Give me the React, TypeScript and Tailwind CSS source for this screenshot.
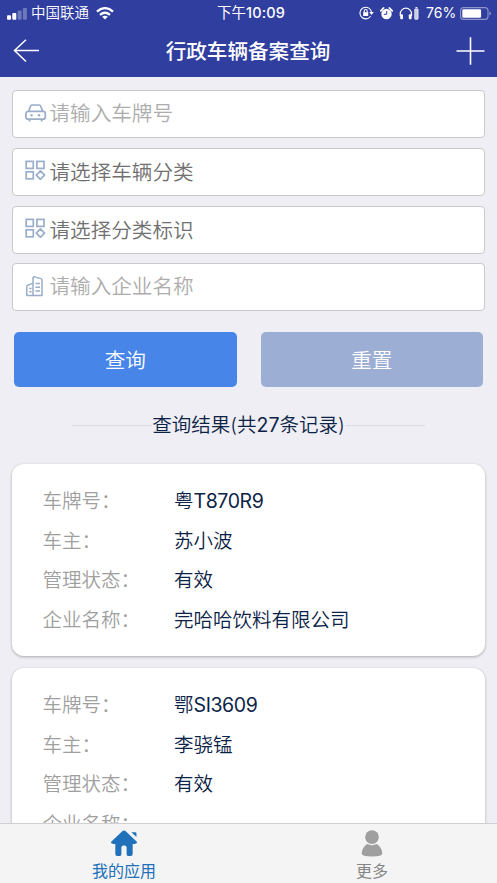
import type { ReactNode } from 'react';

type Row = { label: string; value: string; code?: string };

const records: Row[][] = [
  [
    { label: '车牌号：', value: '粤', code: 'T870R9' },
    { label: '车主：', value: '苏小波' },
    { label: '管理状态：', value: '有效' },
    { label: '企业名称：', value: '完哈哈饮料有限公司' },
  ],
  [
    { label: '车牌号：', value: '鄂', code: 'SI3609' },
    { label: '车主：', value: '李骁锰' },
    { label: '管理状态：', value: '有效' },
    { label: '企业名称：', value: '' },
  ],
];

function StatusBar() {
  return (
    <div className="flex h-[26px] items-center text-[14.5px] leading-[26px] text-white">
      <div className="flex w-[170px] shrink-0 items-center pl-[7px]">
        <svg width="20" height="12" viewBox="0 0 20 12" fill="#fff" className="mt-[2px]">
          <rect x="0" y="7.2" width="4" height="4.6" rx="1" />
          <rect x="5.3" y="5" width="4" height="6.8" rx="1" />
          <rect x="10.6" y="2.5" width="4" height="9.3" rx="1" opacity=".3" />
          <rect x="15.9" y="0" width="4" height="11.8" rx="1" opacity=".3" />
        </svg>
        <span className="ml-[4px] font-[350]">中国联通</span>
        <svg width="18" height="13" viewBox="0 0 18 13" className="ml-[7px]" fill="none" stroke="#fff" strokeWidth="2.3">
          <path d="M1 4.6Q9-2.3 17 4.6" />
          <path d="M4 7.8q5-4.2 10 0" />
          <path d="M9 12.6 6.2 9.8q2.8-2.3 5.6 0z" fill="#fff" stroke="none" />
        </svg>
      </div>
      <div className="w-[162px] shrink-0 text-center text-[14.5px]">
        下午<span className="font-medium tracking-[0.15px]">10:09</span>
      </div>
      <div className="flex flex-1 items-center pl-[27px]">
        <svg width="15" height="14" viewBox="0 0 15 14" fill="none" stroke="#fff" strokeWidth="1.1">
          <path d="M11.6 10.3A5.8 5.8 0 1 1 12.5 6" />
          <path d="M10.2 6h4.6l-2.3 3z" fill="#fff" stroke="none" />
          <rect x="4.2" y="6.2" width="5" height="3.8" fill="#fff" stroke="none" />
          <path d="M5.2 6.5V5a1.5 1.5 0 0 1 3 0v1.5" />
        </svg>
        <svg width="13" height="13" viewBox="0 0 13 13" className="ml-[6px]">
          <circle cx="6.5" cy="7" r="5.2" fill="#fff" />
          <path d="M.8 3.8 3.5 1M12.2 3.8 9.5 1" stroke="#fff" strokeWidth="1.8" strokeLinecap="round" />
          <path d="M6.7 4v3.3H3.8" stroke="#303e9f" strokeWidth="1" fill="none" />
        </svg>
        <svg width="21" height="13" viewBox="0 0 21 13" className="ml-[6px]">
          <path d="M1.3 9V6.8a5.6 5.6 0 0 1 11.2 0V9" fill="none" stroke="#fff" strokeWidth="1.2" />
          <rect x="1.2" y="7.2" width="2.8" height="5" rx="1" fill="#fff" />
          <rect x="9.8" y="7.2" width="2.8" height="5" rx="1" fill="#fff" />
          <rect x="15.6" y="1.8" width="3.6" height="10.6" rx=".8" fill="#fff" fillOpacity=".75" stroke="#fff" strokeWidth=".5" />
          <rect x="16.5" y="0" width="1.8" height="1.2" fill="#fff" />
        </svg>
        <span className="ml-[6px] w-[30px] text-[14px]">76%</span>
        <svg width="32" height="13" viewBox="0 0 32 13" className="ml-[4px] shrink-0">
          <rect x=".6" y=".6" width="27.4" height="11.8" rx="3" fill="none" stroke="#fff" strokeOpacity=".45" strokeWidth="1.1" />
          <rect x="2.3" y="2.2" width="18.8" height="8.6" rx="1.2" fill="#fff" />
          <path d="M29.4 4.4q1.6.6 1.6 2.1t-1.6 2.1z" fill="#fff" opacity=".45" />
        </svg>
      </div>
    </div>
  );
}

function CarIcon() {
  return (
    <svg width="22" height="20" viewBox="0 0 22 20" fill="none" stroke="#9aadc9" strokeWidth="1.7" strokeLinejoin="round">
      <path d="M3.7 8.4 5.4 3.3Q5.8 2 7.2 2h6.8q1.4 0 1.8 1.3l1.9 5.1" />
      <rect x="0.9" y="8.4" width="19.4" height="7.8" rx="2.3" />
      <path d="M4.5 16.2v2.4M16.7 16.2v2.4" strokeWidth="1.9" />
      <circle cx="6.6" cy="12.2" r="1.2" fill="#9aadc9" stroke="none" />
      <circle cx="14" cy="12.2" r="1.2" fill="#9aadc9" stroke="none" />
    </svg>
  );
}

function CategoryIcon() {
  return (
    <svg width="22" height="20" viewBox="0 0 22 20" fill="none" stroke="#9aadc9" strokeWidth="1.7">
      <rect x="1.2" y="1.4" width="7.1" height="7" />
      <rect x="11.9" y="1.4" width="7.1" height="7" />
      <rect x="1.2" y="11.8" width="7.1" height="7" />
      <path d="m15.4 10.9 4.1 4.2-4.1 4.2-4.1-4.2z" strokeLinejoin="round" />
    </svg>
  );
}

function CompanyIcon() {
  return (
    <svg width="22" height="22" viewBox="0 0 22 22" fill="none" stroke="#9aadc9" strokeWidth="1.5" strokeLinejoin="round">
      <path d="M8 20.5V3.2q0-1.6 1.5-1.3l6.3 1.7q1.2.3 1.2 1.5v15.4z" />
      <path d="M8 8.4 3.2 10Q1.8 10.4 1.8 11.6v8.9H8M4.2 13.4H6.6M4.2 16.8H6.6M10.4 8.5h4.6M10.4 12.2h4.6M10.4 15.9h4.6" />
    </svg>
  );
}

function Field({ icon, text, select = false }: { icon: ReactNode; text: string; select?: boolean }) {
  return (
    <div className="flex h-[48px] items-center rounded-[4px] border border-[#c9c9cb] bg-white pl-[12px]">
      <span className="w-[24.5px] shrink-0 pb-[3px]">{icon}</span>
      <span
        className={`text-[20.6px] font-[350] leading-[40px] ${select ? 'pt-[2px] text-[#707070]' : 'pb-[1px] text-[#adadad]'}`}
      >
        {text}
      </span>
    </div>
  );
}

function RecordCard({ rows }: { rows: Row[] }) {
  return (
    <div className="h-[192px] shrink-0 rounded-[12px] bg-white pl-[30.5px] pt-[18px] shadow-[0_1px_3px_rgba(0,0,0,0.3)]">
      {rows.map((row) => (
        <div key={row.label} className="flex h-[39.6px] items-center text-[19.5px] font-[350] leading-[39.6px]">
          <span className="w-[131.5px] shrink-0 text-[#9f9f9f]">{row.label}</span>
          <span className="text-[#0c2347]">
            {row.value}
            {row.code && <span className="font-normal tracking-[-0.4px]">{row.code}</span>}
          </span>
        </div>
      ))}
    </div>
  );
}

export default function App() {
  return (
    <div lang="zh-CN" className="flex h-[883px] w-[497px] flex-col overflow-hidden bg-[#efeef4] font-['Inter','Noto_Sans_CJK_SC',sans-serif]">
      <header className="h-[77px] shrink-0 bg-[#303e9f]">
        <StatusBar />
        <div className="flex h-[51px] items-center justify-between pl-[13px] pr-[12px] text-white">
          <svg width="28" height="24" viewBox="0 0 28 24" fill="none" stroke="#fff" strokeWidth="1.5" className="mb-[2px]">
            <path d="M26 11.5H1.5M13 .8 1.5 11.5 13 22.5" />
          </svg>
          <h1 className="mr-px text-[20.6px] font-medium leading-[40px]">行政车辆备案查询</h1>
          <svg width="29" height="28" viewBox="0 0 29 28" fill="none" stroke="#fff" strokeWidth="1.6" className="mb-px">
            <path d="M.5 14h28M14.5.3v27.4" />
          </svg>
        </div>
      </header>

      <main className="flex min-h-0 flex-1 flex-col overflow-hidden px-[12px] pt-[13.4px]">
        <div className="flex shrink-0 flex-col gap-[9.6px]">
          <Field icon={<CarIcon />} text="请输入车牌号" />
          <Field icon={<CategoryIcon />} text="请选择车辆分类" select />
          <Field icon={<CategoryIcon />} text="请选择分类标识" select />
          <Field icon={<CompanyIcon />} text="请输入企业名称" />
        </div>
        <div className="mt-[21.1px] flex shrink-0 gap-[24px] px-[2px] text-[20.6px] font-[350] text-white">
          <button className="h-[54.4px] flex-1 rounded-[5px] bg-[#4885e8] pt-[3px]">查询</button>
          <button className="h-[54.4px] flex-1 rounded-[5px] bg-[#9caed3] pt-[3px]">重置</button>
        </div>
        <div className="mx-[60px] mt-[18.8px] flex h-[40px] shrink-0 items-center">
          <span className="h-px flex-1 bg-[#dddce2]" />
          <span className="text-[19.5px] font-[350] leading-[40px] text-[#0c2347]">
            查询结果(共<span className="font-normal">27</span>条记录)
          </span>
          <span className="h-px flex-1 bg-[#dddce2]" />
        </div>
        <div className="mt-[18.7px] flex shrink-0 flex-col gap-[12px]">
          {records.map((rows, index) => (
            <RecordCard key={index} rows={rows} />
          ))}
        </div>
      </main>

      <nav className="z-10 flex h-[60px] shrink-0 border-t border-[#cfcfd1] bg-[#f4f4f4] pr-px text-[16px]">
        <div className="flex flex-1 flex-col items-center pt-[6px] text-[#2070ba]">
          <svg width="28" height="28" viewBox="0 0 28 28" fill="currentColor">
            <path d="M12.2 1.3q1.8-1.5 3.6 0L27 11.8q1 1 .2 1.8t-2 .8H23v10.3q0 2.3-2 2.3h-2.7q-1.6 0-1.6-2v-7q0-1.8-2.2-1.8h-1q-2.2 0-2.2 1.8v7q0 2-1.6 2H7q-2 0-2-2.3V14.4H2.8q-1.2 0-2-.8t.2-1.8z" />
            <path d="M21.6 2.3h4.1q1.2 0 1.2 1.2v3.8z" />
          </svg>
          <span className="mt-[2px] leading-[24px]">我的应用</span>
        </div>
        <div className="flex flex-1 flex-col items-center pt-[6px] text-[#858585]">
          <svg width="24" height="28" viewBox="0 0 24 28" fill="#9e9f9e">
            <circle cx="12" cy="7.3" r="7.1" />
            <path d="M7 14.6q5 2.4 10 0 5.6 3.6 5.6 10.1 0 2.9-10.6 2.9T1.4 24.7Q1.4 18.2 7 14.6z" />
          </svg>
          <span className="mt-[2px] leading-[24px]">更多</span>
        </div>
      </nav>
    </div>
  );
}
